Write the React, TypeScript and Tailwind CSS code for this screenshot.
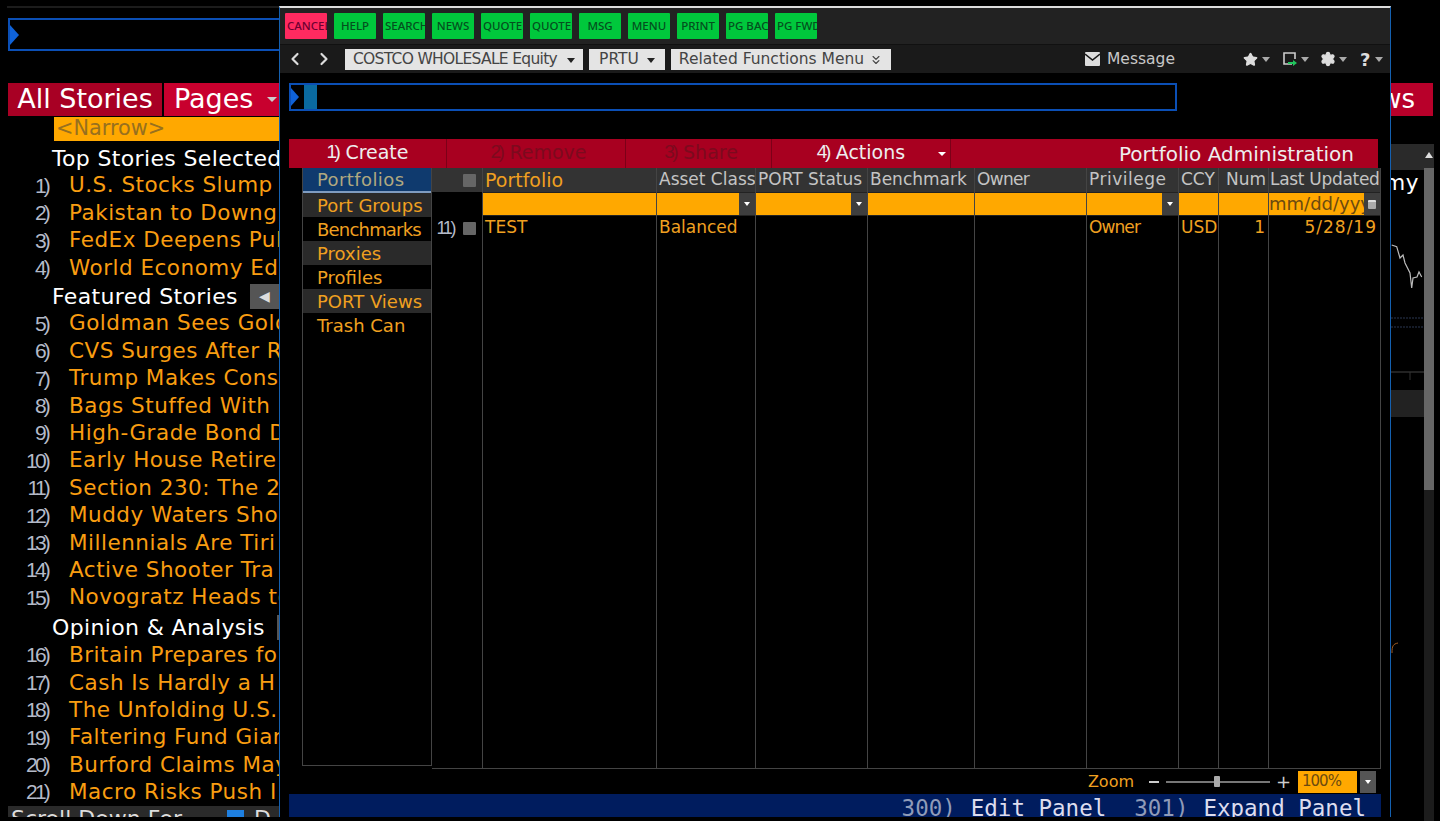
import React from 'react';
import { ChevronLeft, ChevronRight, ChevronsDown, Star, Settings } from 'lucide-react';

const topStories = ['U.S. Stocks Slump', 'Pakistan to Downg', 'FedEx Deepens Pul', 'World Economy Edg'];
const featured = [
  'Goldman Sees Gold', 'CVS Surges After R', 'Trump Makes Cons', 'Bags Stuffed With (', 'High-Grade Bond D', 'Early House Retire',
  'Section 230: The 2', 'Muddy Waters Shor', 'Millennials Are Tiri', 'Active Shooter Tra', 'Novogratz Heads to',
];
const opinion = ['Britain Prepares fo', 'Cash Is Hardly a H', 'The Unfolding U.S.', 'Faltering Fund Gian', 'Burford Claims May', 'Macro Risks Push I'];

const toolbar = [
  'CANCEL', 'HELP', 'SEARCH', 'NEWS', 'QUOTE', 'QUOTE', 'MSG', 'MENU', 'PRINT', 'PG BACK', 'PG FWD',
];

const sideItems = ['Port Groups', 'Benchmarks', 'Proxies', 'Profiles', 'PORT Views', 'Trash Can'];

type Column = {
  title: string;
  width: string;
  value?: string;
  headerClass?: string;
  valueClass?: string;
  right?: boolean;
  select?: boolean;
};

const columns: Column[] = [
  { title: 'Portfolio', width: 'w-[174px]', value: 'TEST', headerClass: 'text-[#f0a020] text-[19px]' },
  { title: 'Asset Class', width: 'w-[99px]', value: 'Balanced', select: true },
  { title: 'PORT Status', width: 'w-[112px]', select: true },
  { title: 'Benchmark', width: 'w-[107px]' },
  { title: 'Owner', width: 'w-[112px]', headerClass: 'text-[#c4c4c4] tracking-[-0.7px]' },
  { title: 'Privilege', width: 'w-[92px]', value: 'Owner', valueClass: 'tracking-[-0.9px]', headerClass: 'text-[#c4c4c4] tracking-[0.5px]', select: true },
  { title: 'CCY', width: 'w-[40px]', value: 'USD' },
  { title: 'Num', width: 'w-[50px]', value: '1', right: true },
];

function NewsRow({ n, title }: { n: number; title: string }) {
  return (
    <div className="flex h-[27.4px] items-center whitespace-nowrap">
      <span className="w-[48px] shrink-0 text-right font-['Liberation_Sans',sans-serif] text-[21px] tracking-[-2.8px] text-[#b4bac8]">
        {n})
      </span>
      <span className="ml-[21px] text-[21.5px] tracking-[0.5px] text-[#f99d11]">{title}</span>
    </div>
  );
}

function SectionRow({ title, arrow }: { title: string; arrow?: boolean }) {
  return (
    <div className="flex h-[27.4px] items-center whitespace-nowrap pl-[52px]">
      <span className="text-[22px] tracking-[0.35px] text-white">{title}</span>
      {arrow && (
        <span className="ml-[12px] flex h-[25px] w-[40px] shrink-0 items-center bg-[#555] pl-[9px] text-[14px] text-[#ddd]">◀</span>
      )}
    </div>
  );
}

function NewsPanel() {
  return (
    <div className="flex w-[279px] shrink-0 flex-col overflow-hidden pt-[6px]">
      <div className="ml-[7px] h-[2px] bg-[#1c1c1c]" />
      <div className="mt-[10px] ml-[8px] flex h-[33px] items-center border-2 border-r-0 border-[#0b4fb5]">
        <span className="h-0 w-0 border-y-[10px] border-l-[9px] border-y-transparent border-l-[#0f62d8]" />
      </div>
      <div className="mt-[32px] ml-[8px] flex h-[33px] gap-[2px] whitespace-nowrap text-[27px] font-medium text-white">
        <div className="flex w-[154px] items-center justify-center bg-[#a80024]">All Stories</div>
        <div className="flex flex-1 items-center bg-[#c8002e] pl-[10px]">
          Pages
          <span className="ml-[14px] h-0 w-0 border-x-[5px] border-t-[5px] border-x-transparent border-t-[#ccc]" />
        </div>
      </div>
      <div className="mt-px ml-[54px] flex h-[24px] items-center bg-[#ffa800] pl-[2px] text-[20.8px] text-[#97701f]">&lt;Narrow&gt;</div>
      <div className="mt-[3.5px]">
        <SectionRow title="Top Stories Selected" />
        {topStories.map((t, i) => (
          <NewsRow key={t} n={i + 1} title={t} />
        ))}
        <div className="h-[1px]" />
        <SectionRow title="Featured Stories" arrow />
        {featured.map((t, i) => (
          <NewsRow key={t} n={i + 5} title={t} />
        ))}
        <div className="h-[3px]" />
        <SectionRow title="Opinion & Analysis" arrow />
        {opinion.map((t, i) => (
          <NewsRow key={t} n={i + 16} title={t} />
        ))}
      </div>
      <div className="ml-[8px] flex h-[11px] items-start overflow-hidden whitespace-nowrap bg-[#2a2a2a] pl-[3px] text-[22px] leading-[26px] text-[#ddd]">
        <span className="w-[216px] shrink-0">Scroll Down For</span>
        <span className="mt-[4px] h-[14px] w-[17px] shrink-0 bg-[#1e7fe0]" />
        <span className="ml-[10px]">D</span>
      </div>
    </div>
  );
}

function Caret({ dark, gap }: { dark?: boolean; gap: string }) {
  return (
    <span
      className={`${gap} h-0 w-0 shrink-0 border-x-[4px] border-t-[5px] border-x-transparent ${
        dark ? 'border-t-[#222]' : 'border-t-[#aaa]'
      }`}
    />
  );
}

function SelectArrow() {
  return (
    <span className="flex h-full w-[16px] shrink-0 items-center justify-center bg-[#3e3e3e]">
      <span className="h-0 w-0 border-x-[3px] border-t-[4px] border-x-transparent border-t-white" />
    </span>
  );
}

function Toolbar() {
  return (
    <div className="flex h-[37px] items-center gap-[7px] border-b border-[#111] bg-[#222] pl-[5px]">
      {toolbar.map((label, i) => (
        <div
          key={i}
          className={`flex h-[26px] w-[42px] items-center overflow-hidden rounded-[1px] px-[2px] font-['Noto_Sans',sans-serif] text-[11.5px] font-medium whitespace-nowrap [justify-content:safe_center] ${
            i === 0 ? 'bg-[#ff2a60] text-[#6d0030]' : 'bg-[#00c83c] text-[#044f1e]'
          }`}
        >
          {label}
        </div>
      ))}
    </div>
  );
}

function NavBar() {
  return (
    <div className="flex h-[28px] items-center bg-[#1a1a1a] text-[15.5px] whitespace-nowrap text-[#444]">
      <ChevronLeft size={20} strokeWidth={2.6} className="ml-[5px] shrink-0 text-[#ddd]" />
      <ChevronRight size={20} strokeWidth={2.6} className="ml-[9px] shrink-0 text-[#ddd]" />
      <div className="ml-[11px] flex h-[21px] w-[238px] shrink-0 items-center justify-center bg-[#e4e4e4] pt-[2px] tracking-[-0.7px]">
        COSTCO WHOLESALE Equity
        <Caret dark gap="ml-[10px]" />
      </div>
      <div className="ml-[6px] flex h-[21px] w-[76px] shrink-0 items-center justify-center bg-[#e4e4e4] pt-[2px]">
        PRTU
        <Caret dark gap="ml-[8px]" />
      </div>
      <div className="ml-[6px] flex h-[21px] w-[220px] shrink-0 items-center justify-center bg-[#e4e4e4] pt-[2px]">
        Related Functions Menu
        <ChevronsDown size={14} className="ml-[5px]" />
      </div>
      <svg width="15" height="14" viewBox="0 0 15 14" className="ml-[194px] shrink-0">
        <rect width="15" height="14" rx="1" fill="#ddd" />
        <path d="M0 2l7.5 6L15 2" fill="none" stroke="#1a1a1a" strokeWidth="1.6" />
      </svg>
      <span className="ml-[7px] w-[70px] shrink-0 pt-[2px] text-[#c8c8c8]">Message</span>
      <Star size={15} className="ml-[66px] shrink-0 fill-[#ddd] text-[#ddd]" />
      <Caret gap="ml-[4px]" />
      <svg width="16" height="16" viewBox="0 0 16 16" className="ml-[12px] shrink-0">
        <path d="M10 13H2V2h11v6" fill="none" stroke="#ccc" strokeWidth="1.6" />
        <path d="M6 11h5V9l4 3-4 3v-2H6z" fill="#22c55e" />
      </svg>
      <Caret gap="ml-[3px]" />
      <Settings size={16} className="ml-[11px] shrink-0 fill-[#ddd] text-[#ddd]" />
      <Caret gap="ml-[3px]" />
      <span className="ml-[13px] w-[12px] shrink-0 text-[18px] font-bold text-[#ddd]">?</span>
      <Caret gap="ml-[3px]" />
    </div>
  );
}

function ActionNumber({ children }: { children: React.ReactNode }) {
  return <span className="mr-[7px] font-['Liberation_Sans',sans-serif] tracking-[-2.5px]">{children}</span>;
}

function ActionBar() {
  return (
    <div className="mt-[28px] ml-[9px] flex h-[29px] w-[1089px] items-center whitespace-nowrap bg-[#a80020] text-[19px] text-[#eee]">
      <div className="flex h-full w-[158px] items-center justify-center border-r border-[#7c0018] pb-[3px]">
        <ActionNumber>1)</ActionNumber>Create
      </div>
      <div className="flex h-full w-[179px] items-center justify-center border-r border-[#7c0018] pb-[3px] pl-[5px] text-[#7c0a1e]">
        <ActionNumber>2)</ActionNumber>Remove
      </div>
      <div className="flex h-full w-[146px] items-center justify-center border-r border-[#7c0018] pb-[3px] pl-[5px] text-[#7c0a1e]">
        <ActionNumber>3)</ActionNumber>Share
      </div>
      <div className="relative flex h-full w-[179px] items-center justify-center border-r border-[#7c0018] pb-[3px]">
        <ActionNumber>4)</ActionNumber>Actions
        <span className="absolute right-[4px] top-[13px] h-0 w-0 border-x-[4px] border-t-[4px] border-x-transparent border-t-white" />
      </div>
      <div className="flex-1 pr-[24px] text-right text-[20px]">Portfolio Administration</div>
    </div>
  );
}

function Sidebar() {
  return (
    <div className="ml-[22px] h-[598px] w-[130px] shrink-0 border-x border-b border-[#444] text-[18px] text-[#f0a020]">
      <div className="flex h-[25px] items-center border-b-[2px] border-[#7f9cc0] bg-[#0f3a6e] pl-[14px] tracking-[0.4px] text-[#b0a880]">Portfolios</div>
      {sideItems.map((item, i) => (
        <div
          key={item}
          className={`flex h-[24px] items-center pl-[14px] ${i % 2 === 0 ? 'bg-[#2a2a2a]' : 'bg-black'} ${
            item === 'Benchmarks' ? 'tracking-[-0.8px]' : ''
          }`}
        >
          {item}
        </div>
      ))}
    </div>
  );
}

function DataColumn({ col }: { col: Column }) {
  return (
    <div className={`${col.width} shrink-0 border-r border-[#444]`}>
      <div
        className={`flex h-[24px] items-center overflow-hidden whitespace-nowrap bg-[#333] px-[2px] ${
          col.headerClass ?? 'text-[#c4c4c4]'
        } ${col.right ? 'justify-end' : ''}`}
      >
        {col.title}
      </div>
      <div className="flex h-[24px] border-y border-[#222] bg-[#ffa800]">
        <span className="flex-1" />
        {col.select && <SelectArrow />}
      </div>
      <div className={`flex h-[24px] items-center px-[2px] text-[#f0a020] ${col.valueClass ?? ''} ${col.right ? 'justify-end pr-[3px]' : ''}`}>
        {col.value}
      </div>
    </div>
  );
}

function Table() {
  return (
    <div className="flex h-[601px] w-[949px] shrink-0 border-b border-[#444] text-[17px]">
      <div className="w-[51px] shrink-0 border-r border-[#444]">
        <div className="flex h-[24px] items-center justify-end bg-[#333] pr-[6px]">
          <span className="h-[13px] w-[13px] rounded-[1px] bg-[#666]" />
        </div>
        <div className="h-[24px]" />
        <div className="flex h-[24px] items-center justify-end pr-[6px] text-[#b4bac8]">
          <span className="mr-[9px] font-['Liberation_Sans',sans-serif] text-[18px] tracking-[-2.4px]">11)</span>
          <span className="h-[13px] w-[13px] rounded-[1px] bg-[#666]" />
        </div>
      </div>
      {columns.map((col) => (
        <DataColumn key={col.title} col={col} />
      ))}
      <div className="min-w-0 flex-1 border-r border-[#444]">
        <div className="flex h-[24px] items-center overflow-hidden whitespace-nowrap bg-[#333] pl-[1px] tracking-[-0.3px] text-[#c4c4c4]">Last Updated</div>
        <div className="flex h-[24px] border-y border-[#222] bg-[#ffa800] text-[18px] text-[#6b4a10]">
          <span className="min-w-0 flex-1 overflow-hidden whitespace-nowrap leading-[22px]">mm/dd/yyyy</span>
          <span className="flex w-[16px] shrink-0 items-center justify-center bg-[#3e3e3e]">
            <span className="h-[9px] w-[8px] rounded-[1px] border-t-2 border-[#ddd] bg-[#aaa]" />
          </span>
        </div>
        <div className="flex h-[24px] items-center justify-end pr-[3px] tracking-[1px] text-[#f0a020]">5/28/19</div>
      </div>
    </div>
  );
}

function ZoomBar() {
  return (
    <div className="flex h-[25px] items-center justify-end pr-[14px] text-[#ccc]">
      <span className="text-[16px] text-[#f0a020]">Zoom</span>
      <span className="ml-[15px] h-[2px] w-[10px] bg-[#ccc]" />
      <div className="relative mr-[6px] ml-[7px] flex h-[12px] w-[104px] items-center">
        <span className="h-[2px] w-full bg-[#777]" />
        <span className="absolute left-[48px] h-[11px] w-[6px] rounded-[1px] bg-[#aaa]" />
      </div>
      <span className="w-[11px] text-center text-[18px] leading-none">+</span>
      <div className="ml-[11px] flex h-[22px] w-[59px] items-center bg-[#ffa800] pl-[4px] text-[15px] tracking-[-1px] text-[#6b4a10]">100%</div>
      <span className="ml-[3px] flex h-[22px] w-[16px] items-center justify-center bg-[#555]">
        <span className="h-0 w-0 border-x-[3px] border-t-[4px] border-x-transparent border-t-white" />
      </span>
    </div>
  );
}

function FunctionBar() {
  return (
    <div className="ml-[9px] flex h-[23px] w-[1092px] justify-end overflow-hidden whitespace-nowrap bg-[#001c5e] pr-[15px] font-['DejaVu_Sans_Mono',monospace] text-[22.5px] leading-[28px]">
      <span className="text-[#8f9bb8]">300)</span>
      <span className="ml-[15px] text-[#dde]">Edit Panel</span>
      <span className="ml-[28px] text-[#8f9bb8]">301)</span>
      <span className="ml-[15px] text-[#dde]">Expand Panel</span>
    </div>
  );
}

function PortfolioWindow() {
  return (
    <div className="flex h-[811px] w-[1112px] shrink-0 flex-col border-x border-t-2 border-x-[#1460b0] border-t-[#ddd] bg-black">
      <Toolbar />
      <NavBar />
      <div className="mt-[10px] ml-[9px] flex h-[28px] w-[888px] items-center border-2 border-[#0b4fb5]">
        <span className="h-0 w-0 border-y-[9px] border-l-[8px] border-y-transparent border-l-[#0f62d8]" />
        <span className="ml-[5px] h-full w-[13px] bg-[#0a6aa0]" />
      </div>
      <ActionBar />
      <div className="flex">
        <Sidebar />
        <Table />
      </div>
      <ZoomBar />
      <FunctionBar />
    </div>
  );
}

function RightStrip() {
  return (
    <div className="flex min-w-0 flex-1 pt-[83px]">
      <div className="w-[33px] shrink-0">
        <div className="flex h-[33px] w-[42px] items-center justify-end overflow-hidden bg-[#b8002a] pr-[18px] text-[26px] font-medium text-white">
          ws
        </div>
        <div className="mt-[28px] h-[26px] bg-[#2a2a2a]" />
        <div className="flex h-[24px] justify-end overflow-hidden pr-[5px] text-[21.5px] leading-[26px] tracking-[0.5px] text-white">my</div>
        <svg width="33" height="196" viewBox="0 0 33 196" className="block">
          <path d="M0.7 51 L5.7 52.7 L9 64 L12 61 L14 69 L19 79 L20.7 94 L22 84 L26 83 L28 78 L30.7 83" fill="none" stroke="#bbb" strokeWidth="1.2" />
          <path d="M0 133h33M0 124h33" stroke="#2a3650" strokeDasharray="2 1" />
          <path d="M0 178h33" stroke="#444" />
          <path d="M19 178v8" stroke="#333" />
        </svg>
        <div className="h-[27px] bg-[#222]" />
        <svg width="8" height="12" viewBox="0 0 8 12" className="mt-[224px] block">
          <path d="M1 12 C1 5 2 3 7 2" fill="none" stroke="#a05a20" />
        </svg>
      </div>
      <div className="flex w-[10px] shrink-0 flex-col pt-[61px]">
        <div className="h-[24px] bg-[#2a2a2a] pt-[8px]">
          <div className="mx-auto h-0 w-0 border-x-[4px] border-b-[6px] border-x-transparent border-b-[#ddd]" />
        </div>
        <div className="h-[322px] bg-[#666]" />
        <div className="flex-1 bg-[#1c1c1c]" />
      </div>
    </div>
  );
}

const App: React.FC = () => {
  return (
    <div className="flex h-[821px] w-[1440px] overflow-hidden bg-black font-['DejaVu_Sans',sans-serif]">
      <NewsPanel />
      <div className="pt-[6px]">
        <PortfolioWindow />
      </div>
      <RightStrip />
    </div>
  );
};

export default App;
